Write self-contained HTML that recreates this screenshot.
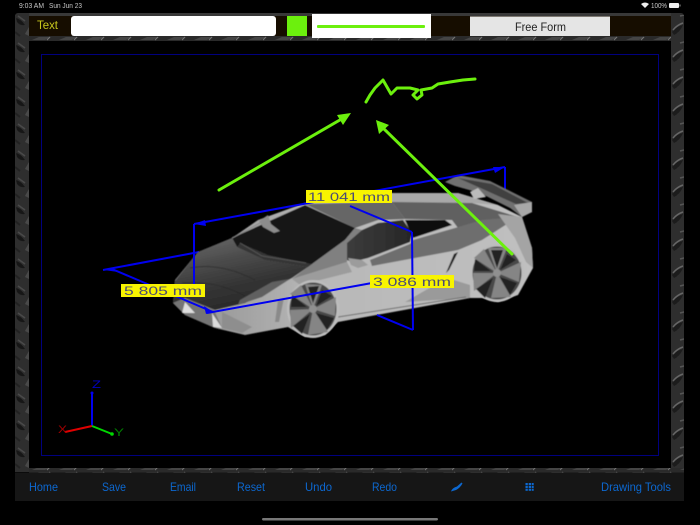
<!DOCTYPE html>
<html><head><meta charset="utf-8"><style>
html,body{margin:0;padding:0;background:#000;width:700px;height:525px;overflow:hidden}
svg{display:block}
text{font-family:"Liberation Sans",sans-serif}
</style></head><body>
<svg width="700" height="525" viewBox="0 0 700 525" xmlns="http://www.w3.org/2000/svg">
<defs>
<filter id="soft" x="0" y="0" width="100%" height="100%"><feGaussianBlur stdDeviation="0.3"/></filter>
<filter id="soft2" x="-5%" y="-5%" width="110%" height="110%"><feGaussianBlur stdDeviation="0.5"/></filter>
<pattern id="pv" width="14" height="27" patternUnits="userSpaceOnUse" x="15" y="12">
<rect width="14" height="27" fill="#2e2e2e"/>
<path d="M1 6 Q6 7 10 13 Q5 14 2 10Z" fill="#191919"/>
<path d="M3 4 L10 9" stroke="#4a4a4a" stroke-width="1.500"/>
<path d="M10 22 L14 15 L14 24Z" fill="#4a4a4a"/>
<path d="M0 20 L5 24" stroke="#202020" stroke-width="2"/>
</pattern>
<pattern id="pr" width="13" height="27" patternUnits="userSpaceOnUse" x="671" y="12">
<rect width="13" height="27" fill="#2e2e2e"/>
<path d="M1 20 Q6 14 12 13 Q9 20 3 23Z" fill="#1b1b1b"/>
<path d="M2 18 Q6 13 12 11" stroke="#666" stroke-width="1.500" fill="none"/>
<path d="M9 4 L13 3" stroke="#555" stroke-width="1.500"/>
</pattern>
<pattern id="ph" width="27" height="5" patternUnits="userSpaceOnUse" x="29" y="36">
<rect width="27" height="5" fill="#2a2a2a"/>
<path d="M3 4 L10 1 L22 1 L16 4Z" fill="#444"/>
<path d="M18 4 L21 1" stroke="#777" stroke-width="1"/>
</pattern>
<linearGradient id="hood" x1="0.1" y1="0" x2="0.5" y2="1">
<stop offset="0" stop-color="#6a6a6a"/><stop offset=".35" stop-color="#4c4c4c"/><stop offset=".7" stop-color="#333"/><stop offset="1" stop-color="#282828"/>
</linearGradient>
<linearGradient id="side" x1="0" y1="0" x2="1" y2="0">
<stop offset="0" stop-color="#8e8e8e"/><stop offset=".4" stop-color="#b8b8b8"/><stop offset="1" stop-color="#c0c0c0"/>
</linearGradient>
<linearGradient id="win" x1="0" y1="0" x2="1" y2="0">
<stop offset="0" stop-color="#3c3c3c"/><stop offset="1" stop-color="#272727"/>
</linearGradient>
</defs>

<g filter="url(#soft)">
<!-- status bar -->
<text x="19" y="8" font-size="7" fill="#c8c8c8" textLength="25" lengthAdjust="spacingAndGlyphs">9:03 AM</text>
<text x="49" y="8" font-size="7" fill="#c8c8c8" textLength="33" lengthAdjust="spacingAndGlyphs">Sun Jun 23</text>
<path d="M641 4 Q645 1 649 4 L645 8Z" fill="#eee"/>
<text x="651" y="8" font-size="7" fill="#c8c8c8" textLength="16" lengthAdjust="spacingAndGlyphs">100%</text>
<rect x="669" y="3" width="10" height="5" rx="1" fill="#eee"/>
<rect x="679.500" y="4.500" width="1" height="2" fill="#999"/>

<!-- frame -->
<rect x="15" y="13" width="669" height="459" rx="3" fill="#2e2e2e"/>
<rect x="15" y="15" width="14" height="457" fill="url(#pv)"/>
<rect x="671" y="15" width="13" height="457" fill="url(#pr)"/>
<rect x="29" y="13" width="642" height="3" fill="#383838"/>
<rect x="29" y="36" width="642" height="5" fill="url(#ph)"/>
<rect x="29" y="468" width="655" height="5" fill="url(#ph)"/>
<rect x="29" y="41" width="642" height="427" fill="#000"/>

<!-- top toolbar -->
<rect x="29" y="16" width="642" height="20" fill="#140b04"/>
<text x="37" y="29" font-size="12" fill="#c8c81c" textLength="21" lengthAdjust="spacingAndGlyphs">Text</text>
<rect x="71" y="16" width="205" height="20" rx="3" fill="#fff"/>
<rect x="287" y="16" width="20" height="20" fill="#6cf010"/>
<rect x="312" y="14" width="119" height="24" fill="#fff"/>
<rect x="317" y="25" width="108" height="3" rx="1" fill="#6cf010"/>
<rect x="470" y="16.500" width="140" height="19.500" fill="#e5e5e5"/>
<text x="515" y="31" font-size="12" fill="#222" textLength="51" lengthAdjust="spacingAndGlyphs">Free Form</text>

<!-- viewport border -->
<rect x="41.500" y="54.500" width="617" height="401" fill="none" stroke="#00007f" stroke-width="1"/>

<!-- rear dimension lines behind car -->
<g stroke="#0000f0" stroke-width="2" fill="none">
<path d="M505 167V197"/>
<path d="M103 270L199 252"/>
</g>

<!-- car -->
<g filter="url(#soft2)">
<!-- spoiler -->
<path d="M445 182L458 175L490 181L532 202L532 212L522 217L510 208L480 193L455 186Z" fill="#707070"/>
<path d="M458 178L492 184L528 203L516 204L485 190Z" fill="#404040"/>
<path d="M514 205L532 202L532 212L522 217Z" fill="#a8a8a8"/>
<!-- silhouette -->
<path d="M173 303L175 280L198 252L232 238L258 220L305 203L392 193L458 193L498 205L522 217L532 248L533 268L518 295L498 302L482 298L470 298L338 322L325 335L305 337L288 327L245 335L215 328L185 315Z" fill="url(#side)"/>
<!-- top light band -->
<path d="M392 193L458 193L498 205L472 203L392 202Z" fill="#a8a8a8"/>
<!-- deck -->
<path d="M392 202L472 203L518 217L482 221L458 228L452 220L405 219Z" fill="#606060"/>
<path d="M470 192L478 188L486 197L474 199Z" fill="#bbb"/>
<!-- roof -->
<path d="M305 204L392 202L405 219L378 220L355 228Z" fill="#666"/>
<!-- windshield -->
<path d="M232 238L305 205L355 228L345 240L308 267L265 260L237 247Z" fill="#131313"/>
<path d="M237 247L265 260L308 267L312 264L268 255L240 243Z" fill="#343434"/>
<path d="M240 243L262 256L306 263" stroke="#555" stroke-width="1" fill="none"/>
<path d="M232 238L262 222" stroke="#888" stroke-width="1" fill="none"/>
<!-- mirror -->
<path d="M259 221L268 215L271 224L280 231L274 233L263 227Z" fill="#8c8c8c"/>
<!-- hood -->
<path d="M175 281L198 252L232 238L237 247L265 260L308 267L292 278L245 303L215 310L185 298L173 303Z" fill="url(#hood)"/>
<path d="M190 268Q220 262 255 280M182 283Q215 280 245 296" stroke="#2a2a2a" stroke-width="1" fill="none" opacity=".7"/>
<path d="M240 300L272 282L290 279L262 297L238 305Z" fill="#606060"/>
<!-- A pillar -->
<path d="M308 267L345 240L355 228L362 230L347 243L347 262L292 279Z" fill="#808080"/>
<path d="M292 279L347 262L352 272L300 285Z" fill="#9c9c9c"/>
<!-- side windows -->
<path d="M347 243L362 230L378 223L403 220L412 233L410 242L368 258L352 262L347 260Z" fill="url(#win)"/>
<path d="M405 220L445 220L452 225L413 238Z" fill="#0c0c0c"/>
<!-- strip below windows -->
<path d="M370 260L410 244L413 240L455 228L482 220L518 217L482 240L458 250L372 266Z" fill="#6e6e6e"/>
<!-- mirror side -->
<path d="M348 258L362 260L368 265L358 268L351 265Z" fill="#9c9c9c"/>
<!-- side intake -->
<path d="M458 252L449 270L446 273L454 254Z" fill="#1e1e1e"/>
<!-- lower crease -->
<path d="M405 302L447 278L470 285L470 298Z" fill="#9a9a9a"/>
<path d="M338 317L466 297" stroke="#6a6a6a" stroke-width="1" fill="none"/>
<!-- front fascia -->
<path d="M173 303L185 298L214 310L222 328L215 328L185 315Z" fill="#747474"/>
<path d="M185 302L195 313L182 313Z" fill="#dedede"/>
<path d="M212 313L222 328L213 327Z" fill="#dcdcdc"/>
<path d="M222 312L252 327L242 333L222 328Z" fill="#8e8e8e"/>
<path d="M278 300L284 298L279 322L275 322Z" fill="#8a8a8a"/>
<!-- rear panel -->
<path d="M498 214L522 217L532 248L533 268L526 262L515 238Z" fill="#a4a4a4"/>
</g>

<!-- wheels -->
<g filter="url(#soft2)">
<ellipse cx="313" cy="309" rx="26" ry="29" fill="#bdbdbd"/>
<ellipse cx="313" cy="309" rx="23.500" ry="26.500" fill="#4a4a4a"/>
<path d="M313 309L305 284L322 285ZM313 309L336 297L335 316ZM313 309L328 332L308 335ZM313 309L291 328L290 310ZM313 309L290 294L301 285Z" fill="#858585"/>
<path d="M322 290L332 296L316 306ZM334 318L327 330L316 313ZM302 334L293 326L310 314ZM291 307L292 295L307 307ZM308 287L319 286L313 303Z" fill="#222"/>
<circle cx="313" cy="309" r="4" fill="#909090"/>
<ellipse cx="497" cy="273" rx="27" ry="29" fill="#bdbdbd"/>
<ellipse cx="497" cy="273" rx="24.500" ry="26.500" fill="#4a4a4a"/>
<path d="M497 273L488 248L507 248ZM497 273L521 262L519 282ZM497 273L511 297L491 298ZM497 273L474 291L473 273ZM497 273L474 258L484 249Z" fill="#858585"/>
<path d="M507 254L516 260L500 270ZM517 283L510 295L500 277ZM485 298L476 289L493 278ZM474 271L475 259L491 271ZM491 250L503 250L497 268Z" fill="#222"/>
<circle cx="497" cy="273" r="4" fill="#909090"/>
</g>

<!-- front dimension lines -->
<g stroke="#0000f0" stroke-width="2" fill="none">
<path d="M194 224L505 167"/>
<path d="M194 224V285"/>
<path d="M112 269L213 312"/>
<path d="M207 313L372 283"/>
<path d="M350 206L412 232"/>
<path d="M412 232L413 330"/>
<path d="M377 315L413 330"/>
</g>
<g fill="#0000f0">
<path d="M194 224L205 220L206 226Z"/>
<path d="M505 167L493 167L495 173Z"/>
<path d="M112 269L104 270L118 272Z"/>
<path d="M213 312L204 306L206 314Z"/>
</g>

<!-- labels -->
<rect x="306" y="190" width="86" height="13" fill="#f8f400"/>
<text x="308" y="201" font-size="11.500" fill="#4c4c74" textLength="82" lengthAdjust="spacingAndGlyphs">11 041 mm</text>
<rect x="121" y="284" width="84" height="13" fill="#f8f400"/>
<text x="124" y="295" font-size="11.500" fill="#4c4c74" textLength="78" lengthAdjust="spacingAndGlyphs">5 805 mm</text>
<rect x="370" y="275" width="84" height="13" fill="#f8f400"/>
<text x="373" y="286" font-size="11.500" fill="#4c4c74" textLength="78" lengthAdjust="spacingAndGlyphs">3 086 mm</text>

<!-- green annotations -->
<g stroke="#6cf010" stroke-width="3" fill="none" stroke-linecap="round" stroke-linejoin="round">
<path d="M219 190L345 117"/>
<path d="M381 126L512 254"/>
<path d="M366 102L370 95L375 88L383 80L391 94L397 88L410 88L418 90L413 95L417 99L422 95L421 90L432 88L438 84L450 82L463 80L475 79"/>
</g>
<path d="M351 113L337 115L343 125Z" fill="#6cf010"/>
<path d="M376 120L379 134L389 125Z" fill="#6cf010"/>

<!-- axes -->
<path d="M92 426V393" stroke="#0000f0" stroke-width="2"/>
<circle cx="92" cy="393" r="1.500" fill="#0000f0"/>
<path d="M92 426L65 432" stroke="#e00000" stroke-width="2"/>
<path d="M92 426L112 434" stroke="#00d800" stroke-width="2"/>
<circle cx="112" cy="434" r="1.800" fill="#00d800"/>
<text x="92" y="388" font-size="11" fill="#0000c0" textLength="9" lengthAdjust="spacingAndGlyphs">Z</text>
<text x="58" y="433" font-size="11" fill="#a00000" textLength="9" lengthAdjust="spacingAndGlyphs">X</text>
<text x="114" y="436" font-size="11" fill="#008000" textLength="10" lengthAdjust="spacingAndGlyphs">Y</text>

<!-- bottom toolbar -->
<rect x="15" y="472.500" width="669" height="28.500" fill="#161616"/>
<g font-size="12" fill="#0a68d0">
<text x="29" y="491" textLength="29" lengthAdjust="spacingAndGlyphs">Home</text>
<text x="102" y="491" textLength="24" lengthAdjust="spacingAndGlyphs">Save</text>
<text x="170" y="491" textLength="26" lengthAdjust="spacingAndGlyphs">Email</text>
<text x="237" y="491" textLength="28" lengthAdjust="spacingAndGlyphs">Reset</text>
<text x="305" y="491" textLength="27" lengthAdjust="spacingAndGlyphs">Undo</text>
<text x="372" y="491" textLength="25" lengthAdjust="spacingAndGlyphs">Redo</text>
<text x="601" y="491" textLength="70" lengthAdjust="spacingAndGlyphs">Drawing Tools</text>
</g>
<path d="M451 491.500Q452 488 457 486.500L461.500 482.500L462.500 483.500Q460 488 456 490Z" fill="#0a68d0"/>
<g fill="#0a68d0">
<rect x="525.500" y="483" width="2.300" height="2.300"/><rect x="528.700" y="483" width="2.300" height="2.300"/><rect x="531.700" y="483" width="2" height="2.300"/>
<rect x="525.500" y="486" width="2.300" height="2.300"/><rect x="528.700" y="486" width="2.300" height="2.300"/><rect x="531.700" y="486" width="2" height="2.300"/>
<rect x="525.500" y="489" width="2.300" height="1.800"/><rect x="528.700" y="489" width="2.300" height="1.800"/><rect x="531.700" y="489" width="2" height="1.800"/>
</g>

<!-- home indicator -->
<rect x="262" y="518" width="176" height="2.500" rx="1.200" fill="#777"/>
</g>
</svg>
</body></html>
